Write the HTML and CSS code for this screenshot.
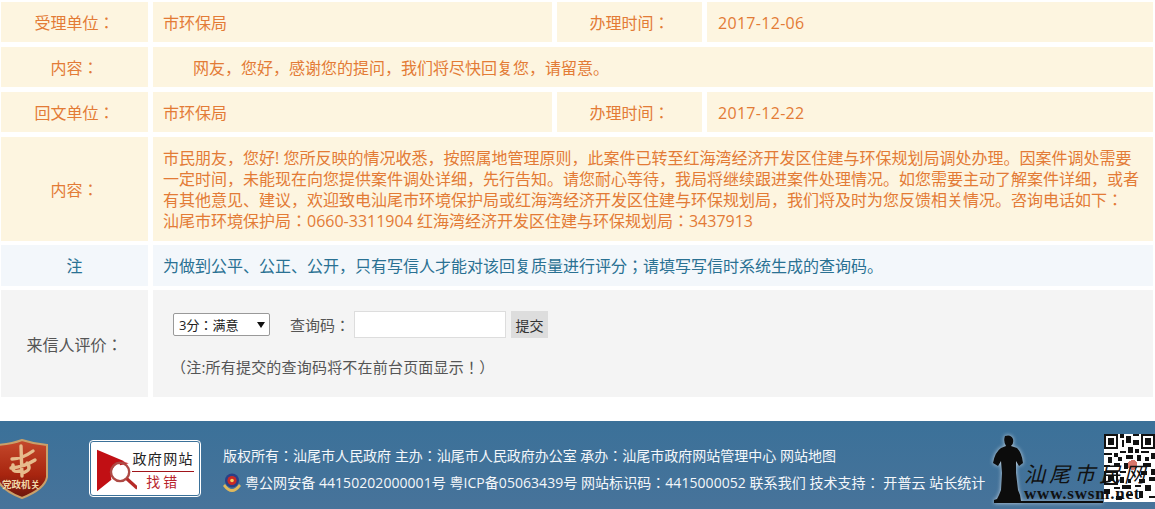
FILE: index.html
```html
<!DOCTYPE html>
<html>
<head>
<meta charset="UTF-8" />
<title>来信详情</title>
<link rel="stylesheet" href="styles.css">
</head>
<body>

  <div class="reply-grid">
    <!-- 受理 -->
    <div class="row row-four">
      <div class="cell label">受理单位：</div>
      <div class="cell value">市环保局</div>
      <div class="cell label">办理时间：</div>
      <div class="cell value date">2017-12-06</div>
    </div>
    <div class="row">
      <div class="cell label">内容：</div>
      <div class="cell value indent">网友，您好，感谢您的提问，我们将尽快回复您，请留意。</div>
    </div>

    <!-- 回文 -->
    <div class="row row-four">
      <div class="cell label">回文单位：</div>
      <div class="cell value">市环保局</div>
      <div class="cell label">办理时间：</div>
      <div class="cell value date">2017-12-22</div>
    </div>
    <div class="row row-tall">
      <div class="cell label">内容：</div>
      <div class="cell value">市民朋友，您好! 您所反映的情况收悉，按照属地管理原则，此案件已转至红海湾经济开发区住建与环保规划局调处办理。因案件调处需要一定时间，未能现在向您提供案件调处详细，先行告知。请您耐心等待，我局将继续跟进案件处理情况。如您需要主动了解案件详细，或者有其他意见、建议，欢迎致电汕尾市环境保护局或红海湾经济开发区住建与环保规划局，我们将及时为您反馈相关情况。咨询电话如下：<br>汕尾市环境保护局：0660-3311904 红海湾经济开发区住建与环保规划局：3437913</div>
    </div>

    <!-- 注 -->
    <div class="row row-note">
      <div class="cell label">注</div>
      <div class="cell value">为做到公平、公正、公开，只有写信人才能对该回复质量进行评分；请填写写信时系统生成的查询码。</div>
    </div>

    <!-- 评价 -->
    <div class="row row-rate">
      <div class="cell label">来信人评价：</div>
      <div class="cell rate-box">
        <form class="rate-form">
          <select class="rate-select">
            <option>3分：满意</option>
            <option>2分：基本满意</option>
            <option>1分：不满意</option>
          </select>
          <label class="code-label" for="code">查询码：</label>
          <input type="text" id="code" class="code-input">
          <button type="button" class="submit-btn">提交</button>
        </form>
        <p class="rate-tip">（注:所有提交的查询码将不在前台页面显示！）</p>
      </div>
    </div>
  </div>

  <div class="footer">
    <svg class="party-badge" width="50" height="62" viewBox="0 0 50 62">
      <defs>
        <linearGradient id="badgeFill" x1="0" y1="0" x2="0" y2="1">
          <stop offset="0" stop-color="#c5492c"/>
          <stop offset="0.6" stop-color="#a8250f"/>
          <stop offset="1" stop-color="#6a150c"/>
        </linearGradient>
      </defs>
      <path d="M-3 6 Q12 5 22 1 Q34 5 47 6 L47 38 Q45 50 22 59 Q-1 50 -3 38 Z" fill="url(#badgeFill)" stroke="#c9a06a" stroke-width="2"/>
      <path d="M12 20 Q22 20 33 12 M11 29 Q24 28 35 21 M20 32 Q11 34 13 26 M27 24 Q33 31 22 34 M21 7 L22 37" fill="none" stroke="#e6bb8c" stroke-width="3.4" stroke-linecap="round"/>
      <text x="21" y="49" class="badge-text" text-anchor="middle">党政机关</text>
    </svg>

    <div class="error-card">
      <svg class="error-icon" width="42" height="48" viewBox="0 0 42 48">
        <path d="M0 2 L29 14 A15 15 0 0 0 15 33 L0 45 Z" fill="#c10f14"/>
        <path d="M22 13 L33 16 L24 18 Z" fill="#c10f14"/>
        <circle cx="24" cy="25" r="9.5" fill="none" stroke="#ad4a45" stroke-width="2.5"/>
        <path d="M31 32 L42 42" stroke="#b52a28" stroke-width="3.5"/>
      </svg>
      <div class="error-words">
        <div class="error-top">政府网站</div>
        <div class="error-bottom">找错</div>
      </div>
    </div>

    <div class="footer-text">
      <div class="footer-line">版权所有：汕尾市人民政府 主办：汕尾市人民政府办公室 承办：汕尾市政府网站管理中心 网站地图</div>
      <div class="footer-line">
        <svg class="police-icon" width="18" height="20" viewBox="0 0 18 20">
          <path d="M2 11 Q9 21 16 11 L18 13 Q9 25 0 13 Z" fill="#e0b95c"/>
          <circle cx="9" cy="7.5" r="7" fill="#2a3f86"/>
          <circle cx="9" cy="7.5" r="4.6" fill="#c92a26"/>
          <circle cx="9" cy="7.5" r="1.8" fill="#f2d060"/>
        </svg>
        <span class="footer-links">粤公网安备 44150202000001号 粤ICP备05063439号 网站标识码：4415000052 联系我们 技术支持： 开普云 站长统计</span>
      </div>
    </div>

    <div class="city-logo">
      <svg class="qr" width="51" height="68" viewBox="0 0 25 33" shape-rendering="crispEdges">
        <rect width="25" height="33" fill="#fff"/>
        <path d="M0 0h7v7h-7z M18 0h7v7h-7z M0 18h7v7h-7z" fill="#111"/>
        <path d="M1 1h5v5h-5z M19 1h5v5h-5z M1 19h5v5h-5z" fill="#fff"/>
        <path d="M2 2h3v3h-3z M20 2h3v3h-3z M2 20h3v3h-3z" fill="#111"/>
        <path d="M8 0h2v2h-2z M11 1h2v3h-2z M14 0h3v1h-3z M9 3h1v3h-1z M14 3h3v2h-3z M8 8h3v1h-3z M12 6h2v3h-2z M15 7h2v2h-2z M18 8h4v1h-4z M23 9h2v3h-2z M0 9h4v1h-4z M5 9h2v2h-2z M2 11h2v3h-2z M7 11h2v2h-2z M11 10h3v2h-3z M16 10h2v3h-2z M20 11h2v2h-2z M0 15h3v1h-3z M5 14h3v2h-3z M10 14h2v3h-2z M19 14h4v2h-4z M23 17h2v3h-2z M8 18h3v1h-3z M18 18h3v2h-3z M8 21h2v3h-2z M12 22h1v2h-1z M17 22h3v2h-3z M22 21h3v2h-3z M9 25h4v2h-4z M15 25h3v1h-3z M20 25h3v3h-3z M0 27h3v2h-3z M5 26h3v1h-3z M11 29h3v1h-3z M17 28h2v3h-2z M22 30h3v1h-3z M6 30h3v2h-3z" fill="#111"/>
        <circle cx="14" cy="15" r="2.4" fill="#d9776b"/>
      </svg>
      <svg class="statue" width="110" height="69" viewBox="0 0 110 69">
        <path d="M12 1 Q18 -1 20 4 Q21 9 18 11 L24 13 Q29 18 30 28 L26 31 L23 26 L23 38 L25 55 L27 60 L28 66 L110 66 L110 68 L1 68 L1 65 L4 64 L6 60 L8 55 L9 38 L8 26 L5 31 L0 28 Q2 17 8 13 L13 11 Q10 6 12 1 Z" fill="#0c0c0c"/>
      </svg>
      <div class="city-words">
        <div class="city-name">汕尾市民网</div>
        <div class="city-url">www.swsm.net</div>
      </div>
    </div>
  </div>

</body>
</html>
```

FILE: styles.css
```css
body {
  margin: 0;
  background-color: white;
  font-family: "Open Sans", "Noto Sans CJK JP", "Noto Sans CJK SC", sans-serif;
  font-weight: 400;
  overflow: hidden;
}

.reply-grid {
  display: flex;
  flex-direction: column;
  gap: 5px;
  padding: 2px 2px 0 1px;
  height: 395px;
}

.row {
  display: grid;
  grid-template-columns: 147px 1fr;
  gap: 5px;
  height: 40px;
  color: #e37b36;
  font-size: 16px;
}

.row-four {
  grid-template-columns: 147px 399px 145px 1fr;
}

.row-tall {
  height: 104px;
}

.row-note {
  height: 41px;
  margin-top: -1px;
  color: #2a7193;
}

.row-rate {
  height: 107px;
  margin-top: -1px;
  color: #555;
}

.cell {
  display: flex;
  align-items: center;
  background-color: #fdf5e0;
  box-sizing: border-box;
}

.row-note .cell {
  background-color: #f3f7fb;
}

.row-rate .cell {
  background-color: #f4f4f4;
}

.label {
  justify-content: center;
}

.row-note .label {
  padding-bottom: 2px;
}

.value {
  padding: 2px 10px 0;
  line-height: 21px;
}

.date {
  padding-left: 11px;
  letter-spacing: 0.3px;
}

.row-tall .value {
  display: block;
  padding: 11px 10px 0;
}

.indent {
  padding-left: 40px;
}

.rate-box {
  display: block;
  padding: 21px 20px 0;
}

.rate-form {
  display: flex;
  align-items: center;
  height: 27px;
}

.rate-select {
  appearance: none;
  width: 97px;
  height: 23px;
  padding: 0 0 0 5px;
  font-family: inherit;
  font-size: 13px;
  color: #222;
  background: white url("data:image/svg+xml,%3Csvg xmlns='http://www.w3.org/2000/svg' width='8' height='6'%3E%3Cpath d='M0 0h8L4 6z' fill='%23111'/%3E%3C/svg%3E") no-repeat right 4px center;
  border: 1px solid #999;
  border-radius: 2px;
}

.code-label {
  font-size: 15px;
  margin-left: 20px;
}

.code-input {
  width: 152px;
  height: 27px;
  box-sizing: border-box;
  border: 1px solid #ddd;
  background-color: white;
  margin-left: 4px;
}

.submit-btn {
  width: 37px;
  height: 27px;
  margin-left: 5px;
  padding: 0;
  border: none;
  background-color: #ddd;
  color: #333;
  font-family: inherit;
  font-size: 14px;
}

.rate-tip {
  margin: 19px 0 0 -2px;
  font-size: 15px;
  line-height: 20px;
  letter-spacing: 0.2px;
}

.footer {
  display: flex;
  margin-top: 24px;
  height: 88px;
  background: linear-gradient(#3b7199, #47739a);
  color: #f4f7fa;
  position: relative;
  overflow: hidden;
}

.party-badge {
  flex: none;
  margin-top: 18px;
}

.badge-text {
  font-size: 9.5px;
  font-weight: 700;
  fill: #f0d8a8;
}

.error-card {
  flex: none;
  display: flex;
  width: 110px;
  height: 55px;
  box-sizing: border-box;
  margin: 20px 0 0 40px;
  padding: 5px 5px 0 6px;
  background-color: white;
  border: 1px solid #3b7199;
  outline: 1px solid #fff;
  border-radius: 3px;
  color: #222;
}

.error-words {
  flex: 1;
  margin-left: -5px;
  text-align: center;
}

.error-top {
  font-size: 14px;
  line-height: 19px;
  margin-top: 2px;
  padding-bottom: 3px;
  letter-spacing: 1.4px;
  white-space: nowrap;
  border-bottom: 1px solid #a0141a;
}

.error-bottom {
  font-size: 14px;
  line-height: 20px;
  letter-spacing: 3px;
  color: #b8242a;
}

.footer-text {
  flex: none;
  width: 775px;
  margin-left: 23px;
  padding-top: 25px;
  font-size: 14px;
  line-height: 20px;
}

.footer-line {
  display: flex;
  align-items: center;
  height: 20px;
  margin-bottom: 7px;
  white-space: nowrap;
}

.footer-line:last-child {
  margin-bottom: 0;
}

.footer-links {
  letter-spacing: 0.05px;
}

.police-icon {
  flex: none;
  margin-right: 4px;
}

.city-logo {
  position: absolute;
  left: 993px;
  top: 14px;
  width: 162px;
  height: 74px;
}

.statue {
  position: absolute;
  left: 0;
  top: 0;
  filter: drop-shadow(0 0 2px rgba(255, 255, 255, 0.7));
}

.city-words {
  position: absolute;
  left: 31px;
  top: 26px;
  color: #111;
  white-space: nowrap;
}

.city-name {
  font-size: 21px;
  font-style: italic;
  line-height: 26px;
  letter-spacing: 4px;
}

.city-url {
  font-family: "Liberation Serif", serif;
  font-weight: bold;
  font-size: 17px;
  line-height: 14px;
  letter-spacing: 0.8px;
}

.qr {
  position: absolute;
  left: 111px;
  top: -1px;
}
```
